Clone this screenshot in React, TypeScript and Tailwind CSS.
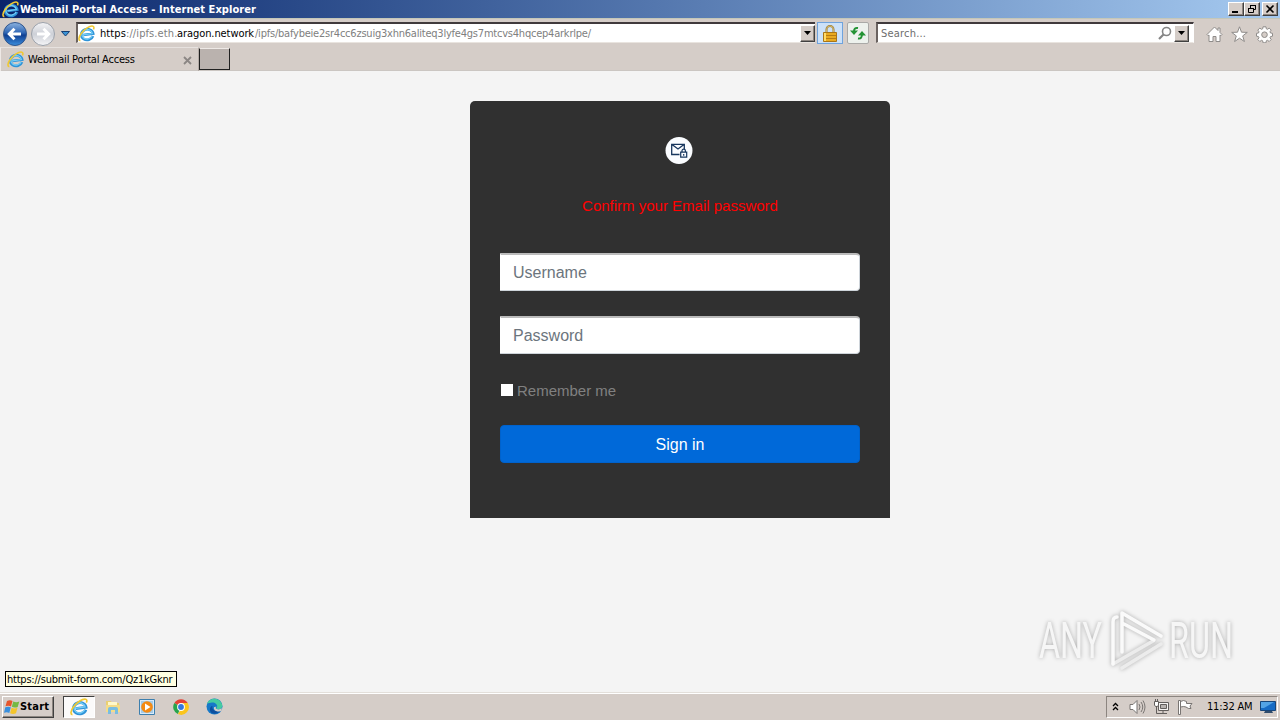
import { useState } from "react";
import type { ReactNode } from "react";

function IEIcon({ size }: { size: number }) {
  return (
    <svg width={size} height={size} viewBox="0 0 16 16" fill="none" className="shrink-0">
      <g transform="rotate(-8 8 9)">
        <path d="M13.800 11.200A5.600 5 0 1 1 14.300 9H5" stroke="#2f93d8" strokeWidth="2.600" />
        <path d="M13 11A5 4.500 0 1 1 13.600 8.800H5" stroke="#74cdf6" strokeWidth="1.200" />
      </g>
      <path d="M2.200 14.800C.3 14.600.4 11.600 3 8 6 3.800 11.300.4 14 1.100c1.300.4 1.100 1.900.5 3.100" stroke="#f0c832" strokeWidth="1.500" />
    </svg>
  );
}

function NavArrow({ back }: { back?: boolean }) {
  return (
    <svg width="26" height="26" viewBox="0 0 26 26" className="shrink-0">
      <defs>
        <linearGradient id="backFill" x1="0" y1="0" x2="0" y2="1">
          <stop offset="0" stopColor="#8db4e0" />
          <stop offset=".45" stopColor="#2f66b4" />
          <stop offset=".55" stopColor="#103f92" />
          <stop offset="1" stopColor="#3c8fdd" />
        </linearGradient>
        <linearGradient id="forwardFill" x1="0" y1="0" x2="0" y2="1">
          <stop offset="0" stopColor="#f4f4f6" />
          <stop offset=".5" stopColor="#cdd0d7" />
          <stop offset="1" stopColor="#f5f5f7" />
        </linearGradient>
      </defs>
      <circle cx="13" cy="13" r="11.500" fill={back ? "url(#backFill)" : "url(#forwardFill)"} stroke={back ? "#31568d" : "#9ba1aa"} />
      {back ? (
        <path d="M19 13H8M12.500 7.800L7.300 13l5.200 5.200" stroke="#fff" strokeWidth="3" fill="none" />
      ) : (
        <path d="M7 13h11M13.500 7.800l5.200 5.200-5.200 5.200" stroke="#fff" strokeWidth="3" fill="none" />
      )}
    </svg>
  );
}

function DropButton() {
  return (
    <span className="flex h-[17px] w-[15px] shrink-0 items-center justify-center border border-t-white border-r-[#404040] border-b-[#404040] border-l-white bg-[#d5cdc8] shadow-[inset_-1px_-1px_0_#8c8580]">
      <svg width="7" height="4" viewBox="0 0 7 4">
        <path d="M0 0h7L3.500 4z" fill="#000" />
      </svg>
    </span>
  );
}

function CaptionButton({ children }: { children: ReactNode }) {
  return (
    <button className="flex h-[14px] w-4 items-center justify-center border border-t-white border-r-[#404040] border-b-[#404040] border-l-white bg-[#d5cdc8] shadow-[inset_-1px_-1px_0_#8c8580]">
      <svg width="12" height="10" viewBox="0 0 12 10" fill="none" stroke="#000">
        {children}
      </svg>
    </button>
  );
}

function TitleBar() {
  return (
    <div className="flex h-[18px] items-center bg-linear-to-r from-[#0a246a] to-[#a6caf0] pr-[2px] pl-[2px]">
      <IEIcon size={17} />
      <span className="ml-px flex-1 pt-px text-[11px] leading-[17px] font-bold tracking-[0.06px] text-white">
        Webmail Portal Access - Internet Explorer
      </span>
      <CaptionButton>
        <path d="M2 8h6" strokeWidth="2" />
      </CaptionButton>
      <CaptionButton>
        <path d="M4.500 5V1.500h5v4H8M4 1.500h6" />
        <path d="M2.500 4.500h5v4h-5zM2 4.500h6" />
      </CaptionButton>
      <span className="w-[2px]" />
      <CaptionButton>
        <path d="M2.500 1.500l7 7M9.500 1.500l-7 7" strokeWidth="1.600" />
      </CaptionButton>
    </div>
  );
}

function AddressBar() {
  return (
    <div className="flex h-[29px] items-start border-t border-[#c4c7b8] pt-[2px]">
      <div className="flex h-[26px] w-[76px] items-center pl-[2px]">
        <NavArrow back />
        <span className="w-[2px]" />
        <NavArrow />
        <svg width="9" height="6" viewBox="0 0 9 6" className="ml-[5px]">
          <path d="M.5.5h8L4.500 5z" fill="#3b94d6" stroke="#173f73" />
        </svg>
      </div>
      <div className="mt-px flex h-[21px] w-[739px] items-center border-t-2 border-b border-l-2 border-t-[#403a3c] border-b-[#e9e4df] border-l-[#6a6260] bg-white">
        <IEIcon size={17} />
        <div className="ml-[5px] flex flex-1 pt-[2px] text-[11px] whitespace-nowrap text-[#808080]">
          <span className="w-[77px] tracking-[0.1px]">
            <span className="text-black">https</span>://ipfs.eth.
          </span>
          <span className="w-[78px] tracking-[-0.08px] text-black">aragon.network</span>
          <span className="tracking-[-0.22px]">/ipfs/bafybeie2sr4cc6zsuig3xhn6aliteq3lyfe4gs7mtcvs4hqcep4arkrlpe/</span>
        </div>
        <DropButton />
      </div>
      <button className="mt-px ml-[2px] flex h-[22px] w-[26px] items-center justify-center border border-[#6fa3dd] bg-[#cce1f8]">
        <svg width="14" height="17" viewBox="0 0 14 17">
          <path d="M3.500 8V4.500a3.500 3.500 0 0 1 7 0V8" fill="none" stroke="#9b7b34" strokeWidth="2" />
          <path d="M3.500 8V4.500a3.500 3.500 0 0 1 7 0V8" fill="none" stroke="#e5cf83" strokeWidth=".7" />
          <path d="M.5 7.500h13v9H.5z" fill="#e9aa20" stroke="#a97516" />
          <path d="M1 10.500h12M1 13.500h12" stroke="#b77c12" />
          <path d="M2 8v8" stroke="#ffdb69" strokeWidth="2" />
        </svg>
      </button>
      <button className="mt-px ml-1 flex h-[22px] w-[22px] items-center justify-center rounded-[2px] border border-[#aaa9a7] bg-[#edf1ed]">
        <svg width="16" height="14" viewBox="0 0 16 14" fill="none" stroke="#239334" strokeWidth="2">
          <path d="M8 2C5 1.500 4 3 4 6" />
          <path d="M0 4.500h8L4 9z" fill="#239334" stroke="none" />
          <path d="M8 12.500c3 .5 4-1 4-5" />
          <path d="M8 9.500h8L12 5z" fill="#239334" stroke="none" />
        </svg>
      </button>
      <div className="mt-px ml-[7px] flex h-[21px] w-[318px] items-center border-t-2 border-r border-b border-l-2 border-t-[#403a3c] border-r-white border-b-[#e9e4df] border-l-[#6a6260] bg-white pr-[4px] pl-[3px]">
        <span className="flex-1 pt-[2px] text-[11px] tracking-[0.2px] text-[#6d6d6d]">Search...</span>
        <svg width="14" height="14" viewBox="0 0 14 14" fill="none" stroke="#858585" className="mr-[2px]">
          <circle cx="8.500" cy="5.500" r="4" strokeWidth="1.600" />
          <path d="M5.500 8.500L1 13" strokeWidth="2.200" />
        </svg>
        <DropButton />
      </div>
      <div className="mt-[5px] ml-[12px] flex gap-[8px]">
        <svg width="17" height="17" viewBox="0 0 17 17" fill="#fff" stroke="#8f8c8a" strokeLinejoin="round">
          <path d="M8.500 1L12 4.500V2h2v4.500l2 2-1 1.200-1-.7v6.500h-4V10.500H7v5H3V9l-1 .7L1 8.500z" />
        </svg>
        <svg width="17" height="17" viewBox="0 0 17 17" fill="#fff" stroke="#8f8c8a" strokeLinejoin="round">
          <path d="M8.500.8l2 5.400 5.800.2-4.600 3.500 1.700 5.600-4.900-3.300-4.900 3.300 1.700-5.600L.7 6.400l5.800-.2z" />
        </svg>
        <svg width="17" height="17" viewBox="0 0 17 17" fill="#fff" stroke="#8f8c8a" strokeLinejoin="round">
          <path d="M7 .8h3l.3 2 1.200.5 1.700-1.200 2 2-1.200 1.700.5 1.200 2 .3v2.900l-2 .4-.5 1.200 1.200 1.700-2 2-1.700-1.200-1.200.5-.3 2H7l-.3-2-1.200-.5-1.700 1.200-2-2L3 11.800l-.5-1.200-2-.4V7.300l2-.3.500-1.200-1.200-1.700 2-2 1.700 1.200 1.200-.5z" />
          <circle cx="8.500" cy="8.700" r="2.800" fill="#d5cdc8" />
        </svg>
      </div>
    </div>
  );
}

function TabRow() {
  return (
    <div className="flex h-6 items-start border-b border-[#cbc6c2]">
      <div className="flex h-6 w-[199px] items-center border-t border-r border-l border-t-[#e7e2df] border-r-[#b2aaa5] border-l-[#eee9e6] pr-[6px] pl-[6px]">
        <IEIcon size={17} />
        <span className="ml-[4px] flex-1 pt-[2px] text-[11px] tracking-[-0.22px] text-black">Webmail Portal Access</span>
        <svg width="9" height="9" viewBox="0 0 9 9" stroke="#8b8684" strokeWidth="1.800" className="mt-[2px]">
          <path d="M1 1l7 7M8 1L1 8" />
        </svg>
      </div>
      <div className="mt-px h-[22px] w-[31px] border border-t-[#eee9e6] border-r-[#202020] border-b-[#202020] border-l-[#202020] bg-[#bab2ae]" />
    </div>
  );
}

function MailBadge() {
  return (
    <svg width="28" height="28" viewBox="0 0 28 28" fill="none">
      <circle cx="14" cy="13.500" r="13.500" fill="#fafcff" />
      <path d="M14.500 17.500H6.700V7.300h12.600v4.700M7 7.500l6 4.500 6-4.500" stroke="#17365e" strokeWidth="1.300" />
      <path d="M15.700 15.200h6v5h-6zM17 15v-1.200a1.700 1.700 0 0 1 3.400 0V15M18.700 17v1.800" stroke="#17365e" strokeWidth="1.200" />
    </svg>
  );
}

function LoginCard() {
  const [remember, setRemember] = useState(false);

  return (
    <form
      onSubmit={(e) => e.preventDefault()}
      className="mt-[30px] flex h-[417px] w-[420px] flex-col rounded-t-[5px] bg-[#303030] px-[30px] font-['Liberation_Sans',Arial,sans-serif]"
    >
      <div className="mt-[36px] flex justify-center pr-[2px]">
        <MailBadge />
      </div>
      <p className="mt-[29px] text-center text-[15px] leading-[24px] text-[#ff0000]">Confirm your Email password</p>
      <input
        type="text"
        placeholder="Username"
        className="mt-[35px] h-[38px] w-full rounded-r-[4px] border border-t-2 border-[#ced4da] border-t-[#bbb] border-l-white bg-white px-3 pt-px text-base text-[#495057] placeholder:text-[#6c757d] focus:outline-none"
      />
      <input
        type="password"
        placeholder="Password"
        className="mt-[25px] h-[38px] w-full rounded-r-[4px] border border-t-2 border-[#ced4da] border-t-[#bbb] border-l-white bg-white px-3 pt-px text-base text-[#495057] placeholder:text-[#6c757d] focus:outline-none"
      />
      <label className="mt-[25px] flex h-6 items-center text-[15px] leading-6 text-[#808080]">
        <input
          type="checkbox"
          checked={remember}
          onChange={() => setRemember(!remember)}
          className="mr-1 mb-[3px] ml-px h-3 w-3 appearance-none bg-white checked:bg-[#006adf]"
        />
        Remember me
      </label>
      <button className="mt-[22px] h-[38px] w-full rounded-[4px] border border-[#0062cc] bg-[#0069d9] pt-[2px] text-base text-white">
        Sign in
      </button>
    </form>
  );
}

function Watermark() {
  return (
    <svg
      width="216"
      height="72"
      viewBox="0 0 216 72"
      fill="none"
      className="absolute right-[30px] bottom-[16px] drop-shadow-[0_0_2px_rgba(0,0,0,0.3)]"
    >
      <g transform="scale(1 1.56)" fill="#f6f6f6" fontFamily="Roboto, sans-serif" fontSize="32" fontWeight="400">
        <text x="5" y="34.600" textLength="63" lengthAdjust="spacingAndGlyphs">ANY</text>
        <text x="135" y="34.600" textLength="64" lengthAdjust="spacingAndGlyphs">RUN</text>
      </g>
      <g strokeWidth="3.500" strokeLinejoin="round" strokeLinecap="round">
        <path d="M88 64l39-24M79 60l40-23" stroke="#ececec" />
        <path d="M83 13q-4 0-4 5v42M88 48V9l39 23M90 20l30 16" stroke="#fafafa" />
      </g>
    </svg>
  );
}

function StartFlag() {
  return (
    <svg width="16" height="16" viewBox="0 0 16 16" className="shrink-0">
      <path d="M3 2q3-1.500 5.500 0L7 7.500Q4.500 6 1.500 7.300z" fill="#e7562b" />
      <path d="M9.300 2.500q3 1.500 6 0L13.700 8q-3 1.300-5.900-.2z" fill="#75b943" />
      <path d="M1.300 8.300q3-1.300 5.500 0L5.300 14Q3 12.500 0 13.700z" fill="#398fdd" />
      <path d="M7.600 8.800q3 1.500 5.900 0L12 14.300q-3 1.300-5.900 0z" fill="#f4c52b" />
    </svg>
  );
}

function Taskbar() {
  return (
    <div className="flex h-[28px] items-center border-t border-[#e3dfda] bg-[#d5cdc8] pr-[2px] pl-[2px] shadow-[inset_0_1px_0_#fff]">
      <button className="flex h-[22px] w-[52px] items-center border border-t-white border-r-[#404040] border-b-[#404040] border-l-white pl-px text-[11px] font-bold tracking-[0.2px] text-black shadow-[inset_-1px_-1px_0_#8c8580]">
        <StartFlag />
        <span className="pt-[2px]">Start</span>
      </button>
      <div className="ml-[9px] flex h-[22px] w-8 items-center justify-center border border-t-[#404040] border-r-white border-b-white border-l-[#404040] bg-[#fbfafa]">
        <IEIcon size={18} />
      </div>
      <svg width="16" height="16" viewBox="0 0 16 16" className="ml-[10px]">
        <path d="M1 2h5l1 2h7v9H1z" fill="#e9cf73" />
        <path d="M3 3h9v4H3z" fill="#fff8c9" />
        <path d="M1 6h14v7H1z" fill="#f4dc88" />
        <path d="M3 15V10q0-2 2-2h6q2 0 2 2v5h-3v-4H6v4z" fill="#79bde1" />
      </svg>
      <svg width="16" height="16" viewBox="0 0 16 16" className="ml-[18px]">
        <path d="M.5.5h15v15H.5z" fill="#d8eafa" stroke="#3d7fae" />
        <path d="M2 2h12v12H2z" fill="#a4cbe8" />
        <circle cx="8" cy="8" r="5.800" fill="#f48a13" />
        <path d="M6 4.500L11.500 8 6 11.500z" fill="#fff" />
      </svg>
      <svg width="16" height="16" viewBox="0 0 16 16" className="ml-[18px]">
        <path d="M8 8L1.300 4A7.800 7.800 0 0 1 14.700 4z" fill="#e44135" />
        <path d="M8 8L4.800 15.100A7.800 7.800 0 0 1 1.300 4z" fill="#28a44c" />
        <path d="M8 8V4h6.700A7.800 7.800 0 0 1 4.800 15.100l3.200-4z" fill="#fbc51c" />
        <circle cx="8" cy="8" r="3.900" fill="#fff" />
        <circle cx="8" cy="8" r="2.900" fill="#3477df" />
      </svg>
      <svg width="17" height="17" viewBox="0 0 17 17" className="ml-[17px]">
        <circle cx="8.500" cy="8.500" r="8" fill="#1678c8" />
        <path d="M1 6C3-.5 13-1.500 16 6c1.300 4-2 6-5 5-1-.4-.7-1.200 0-2 1-2-2-5-5-4.500C4 4.700 2 5 1 6z" fill="#45cba1" />
        <path d="M6.500 8c-1 3 2 6 7.500 5-3 4-9 3.500-10-.5C3.500 10 5 8 6.500 8z" fill="#0c4f9f" />
        <path d="M10.500 8.500c-1 1-1.300 2 .2 2.600 2 .7 4 0 5-1.200v3l-1.700.3c-4 1-6.700-1.500-6-4z" fill="#d5cdc8" />
      </svg>
      <div className="ml-auto flex h-[22px] w-[172px] items-center border border-t-[#8c8580] border-r-white border-b-white border-l-[#8c8580] pl-[5px]">
        <svg width="7" height="9" viewBox="0 0 7 9" fill="none" stroke="#000" strokeWidth="1.300">
          <path d="M1 4l2.500-2.500L6 4M1 8l2.500-2.500L6 8" />
        </svg>
        <svg width="17" height="16" viewBox="0 0 17 16" className="ml-[10px]" fill="none" stroke="#797573">
          <path d="M1 5.500h3l4-4v13l-4-4H1z" fill="#fff" />
          <path d="M10 5q2 3 0 6M12 3q3.500 5 0 10M14 1.500q4 6.500 0 13" />
        </svg>
        <svg width="16" height="16" viewBox="0 0 16 16" className="ml-[7px]" fill="none" stroke="#625e5c">
          <path d="M5.500 3.500h10v8h-10z" fill="#f5f3f1" />
          <path d="M7.500 5.500h6v4h-6z" fill="#b8b3b0" />
          <path d="M10 12v2M7 14.500h7M3.500 7v7.500H7" />
          <path d="M1.500 2.500h4V6l-1 1.500h-2L1.500 6zM2.500 0v2M4.500 0v2" fill="#fff" />
        </svg>
        <svg width="16" height="16" viewBox="0 0 16 16" className="ml-[8px]" stroke="#797573" fill="#fff">
          <path d="M3.500 2.500q3-2 6 0v2h5.500l-2 2.500 1 2.500q-3 .5-5-1.500-2-1-5.500 0zM1.500 1.500h2v14h-2z" />
        </svg>
        <span className="ml-[14px] w-[47px] pt-[2px] text-[11px] tracking-[-0.2px] whitespace-nowrap text-black">11:32 AM</span>
        <svg width="16" height="14" viewBox="0 0 16 14" className="ml-[6px]">
          <path d="M.5 1.500h15v9H.5z" fill="#176bc4" stroke="#174579" />
          <path d="M1 2h13L4 8H1z" fill="#53a3e5" />
          <path d="M5 11h7l1 2H4z" fill="#304c6c" />
        </svg>
      </div>
    </div>
  );
}

export default function App() {
  return (
    <div className="flex h-[720px] w-[1280px] flex-col overflow-hidden bg-[#d5cdc8] font-['DejaVu_Sans_Condensed','DejaVu_Sans',sans-serif]">
      <TitleBar />
      <AddressBar />
      <TabRow />
      <main className="relative flex flex-1 justify-center bg-[#f4f4f4] pl-20">
        <LoginCard />
        <Watermark />
        <div className="absolute bottom-[5px] left-[5px] flex h-4 w-[172px] items-center border border-black bg-[#ffffe1] px-px pt-px text-[11px] leading-[13px] tracking-[-0.22px] whitespace-nowrap text-black">
          https://submit-form.com/Qz1kGknr
        </div>
      </main>
      <Taskbar />
    </div>
  );
}
